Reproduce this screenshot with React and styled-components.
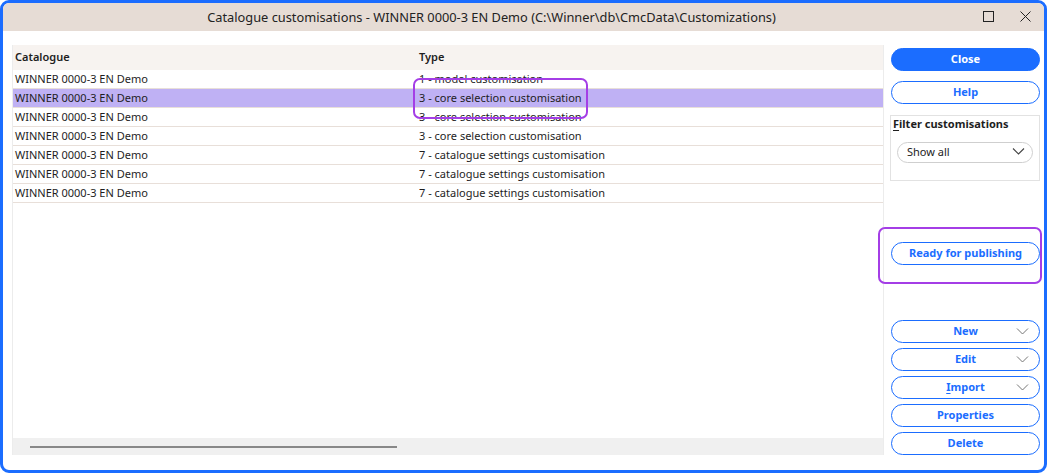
import React from "react";
import styled, { createGlobalStyle } from "styled-components";

const Global = createGlobalStyle`
  html, body { margin: 0; padding: 0; background: #ffffff; }
  * { box-sizing: border-box; }
`;

const FONT = `"Noto Sans", "Open Sans", Arial, sans-serif`;
const BLUE = "#1b6dff";

const Window = styled.div`
  width: 1047px;
  height: 473px;
  border: 3px solid ${BLUE};
  border-radius: 9px;
  overflow: hidden;
  display: flex;
  flex-direction: column;
  font-family: ${FONT};
  background: #fff;
  color: #1e1e1e;
`;

const TitleBar = styled.div`
  height: 28px;
  flex: none;
  background: #e6dcd5;
  position: relative;
  display: flex;
  align-items: center;
  justify-content: center;
  font-size: 12.8px;
  color: #222;
  padding: 0 64px 1px 0;
`;

const TitleButtons = styled.div`
  position: absolute;
  right: 13px;
  top: 0;
  height: 100%;
  display: flex;
  align-items: center;
  gap: 26px;
  padding-bottom: 2px;
`;

const Body = styled.div`
  flex: 1;
  display: flex;
  padding: 14px 0 15px 9px;
  min-height: 0;
`;

const TablePanel = styled.div`
  width: 872px;
  display: flex;
  flex-direction: column;
  border-left: 1px solid #ececec;
  border-right: 1px solid #ececec;
  position: relative;
  font-size: 11px;
`;

const Row = styled.div`
  display: grid;
  grid-template-columns: 404px 1fr;
  height: ${(p) => (p.$header ? "25px" : "19px")};
  align-items: center;
  background: ${(p) => (p.$header ? "#f7f3f0" : p.$selected ? "#bfb1f4" : "#fff")};
  border-bottom: ${(p) => (p.$header ? "none" : "1px solid #e8dfd9")};
  font-weight: ${(p) => (p.$header ? 600 : 400)};
  padding-bottom: 2px;
`;

const Cell = styled.div`
  padding-left: 2px;
  white-space: nowrap;
`;

const Spacer = styled.div`
  flex: 1;
`;

const HScroll = styled.div`
  height: 17px;
  background: #f0f0f0;
  display: flex;
  align-items: center;
  padding-left: 17px;
`;

const Thumb = styled.div`
  width: 367px;
  height: 2px;
  background: #888;
`;

const Annotation = styled.div`
  position: absolute;
  border: 2px solid #a43ee6;
  border-radius: 7px;
  pointer-events: none;
`;

const SidePanel = styled.div`
  flex: 1;
  display: flex;
  flex-direction: column;
  padding: 3px 4px 0 7px;
  position: relative;
`;

const Button = styled.button`
  height: 23px;
  width: 149px;
  flex: none;
  border-radius: 12px;
  border: 1px solid ${BLUE};
  background: ${(p) => (p.$primary ? BLUE : "#fff")};
  color: ${(p) => (p.$primary ? "#fff" : BLUE)};
  font-family: ${FONT};
  font-size: 11px;
  font-weight: 700;
  position: relative;
  display: flex;
  align-items: center;
  justify-content: center;
  padding: 0 0 2px 0;
  margin-top: ${(p) => p.$mt || 0}px;
`;

const Chevron = styled.svg`
  position: absolute;
  right: 10px;
  top: 6px;
`;

const FilterBox = styled.div`
  margin-top: 11px;
  margin-left: -1px;
  width: 150px;
  height: 66px;
  border: 1px solid #e2e2e2;
  padding: 0 0 0 2px;
`;

const FilterLabel = styled.div`
  font-size: 11px;
  font-weight: 700;
  color: #1e1e1e;
  height: 14px;
  line-height: 14px;
  margin-top: 1px;
`;

const U = styled.span`
  text-decoration: underline;
  text-underline-offset: 2px;
`;

const Select = styled.div`
  margin-top: 11px;
  margin-left: 4px;
  width: 136px;
  height: 21px;
  border: 1px solid #cfcfcf;
  border-radius: 11px;
  display: flex;
  align-items: center;
  justify-content: space-between;
  padding: 0 7px 2px 9px;
  font-size: 11px;
  color: #222;
`;

const Gap = styled.div`
  height: ${(p) => p.$h}px;
  flex: none;
`;

const ChevronIcon = ({ color = "#777" }) => (
  <Chevron width="13" height="9" viewBox="0 0 13 9">
    <path d="M1 1.5 L6.5 7 L12 1.5" fill="none" stroke={color} strokeWidth="1" />
  </Chevron>
);

const rows = [
  ["WINNER 0000-3 EN Demo", "1 - model customisation"],
  ["WINNER 0000-3 EN Demo", "3 - core selection customisation", true],
  ["WINNER 0000-3 EN Demo", "3 - core selection customisation"],
  ["WINNER 0000-3 EN Demo", "3 - core selection customisation"],
  ["WINNER 0000-3 EN Demo", "7 - catalogue settings customisation"],
  ["WINNER 0000-3 EN Demo", "7 - catalogue settings customisation"],
  ["WINNER 0000-3 EN Demo", "7 - catalogue settings customisation"],
];

export default function App() {
  return (
    <>
      <Global />
      <Window>
        <TitleBar>
          Catalogue customisations - WINNER 0000-3 EN Demo (C:\Winner\db\CmcData\Customizations)
          <TitleButtons>
            <svg width="11" height="11" viewBox="0 0 11 11">
              <rect x="0.5" y="0.5" width="10" height="10" fill="none" stroke="#222" strokeWidth="1" />
            </svg>
            <svg width="11" height="11" viewBox="0 0 11 11">
              <path d="M0.5 0.5 L10.5 10.5 M10.5 0.5 L0.5 10.5" stroke="#222" strokeWidth="1" />
            </svg>
          </TitleButtons>
        </TitleBar>
        <Body>
          <TablePanel>
            <Row $header>
              <Cell>Catalogue</Cell>
              <Cell>Type</Cell>
            </Row>
            {rows.map(([a, b, sel], i) => (
              <Row key={i} $selected={sel}>
                <Cell>{a}</Cell>
                <Cell>{b}</Cell>
              </Row>
            ))}
            <Spacer />
            <HScroll>
              <Thumb />
            </HScroll>
            <Annotation style={{ left: 400, top: 33, width: 175, height: 41 }} />
          </TablePanel>
          <SidePanel>
            <Button $primary>Close</Button>
            <Button $mt={10}>Help</Button>
            <FilterBox>
              <FilterLabel>
                <U>F</U>ilter customisations
              </FilterLabel>
              <Select>
                <span>Show all</span>
                <svg width="13" height="9" viewBox="0 0 13 9">
                  <path d="M1 1.5 L6.5 7 L12 1.5" fill="none" stroke="#444" strokeWidth="1.1" />
                </svg>
              </Select>
            </FilterBox>
            <Button $mt={61}>Ready for publishing</Button>
            <Annotation style={{ left: -6, top: 182, width: 164, height: 57 }} />
            <Gap $h={55} />
            <Button>
              New
              <ChevronIcon />
            </Button>
            <Button $mt={5}>
              Edit
              <ChevronIcon />
            </Button>
            <Button $mt={5}>
              <span>
                <U>I</U>mport
              </span>
              <ChevronIcon />
            </Button>
            <Button $mt={5}>Properties</Button>
            <Button $mt={5}>Delete</Button>
          </SidePanel>
        </Body>
      </Window>
    </>
  );
}
